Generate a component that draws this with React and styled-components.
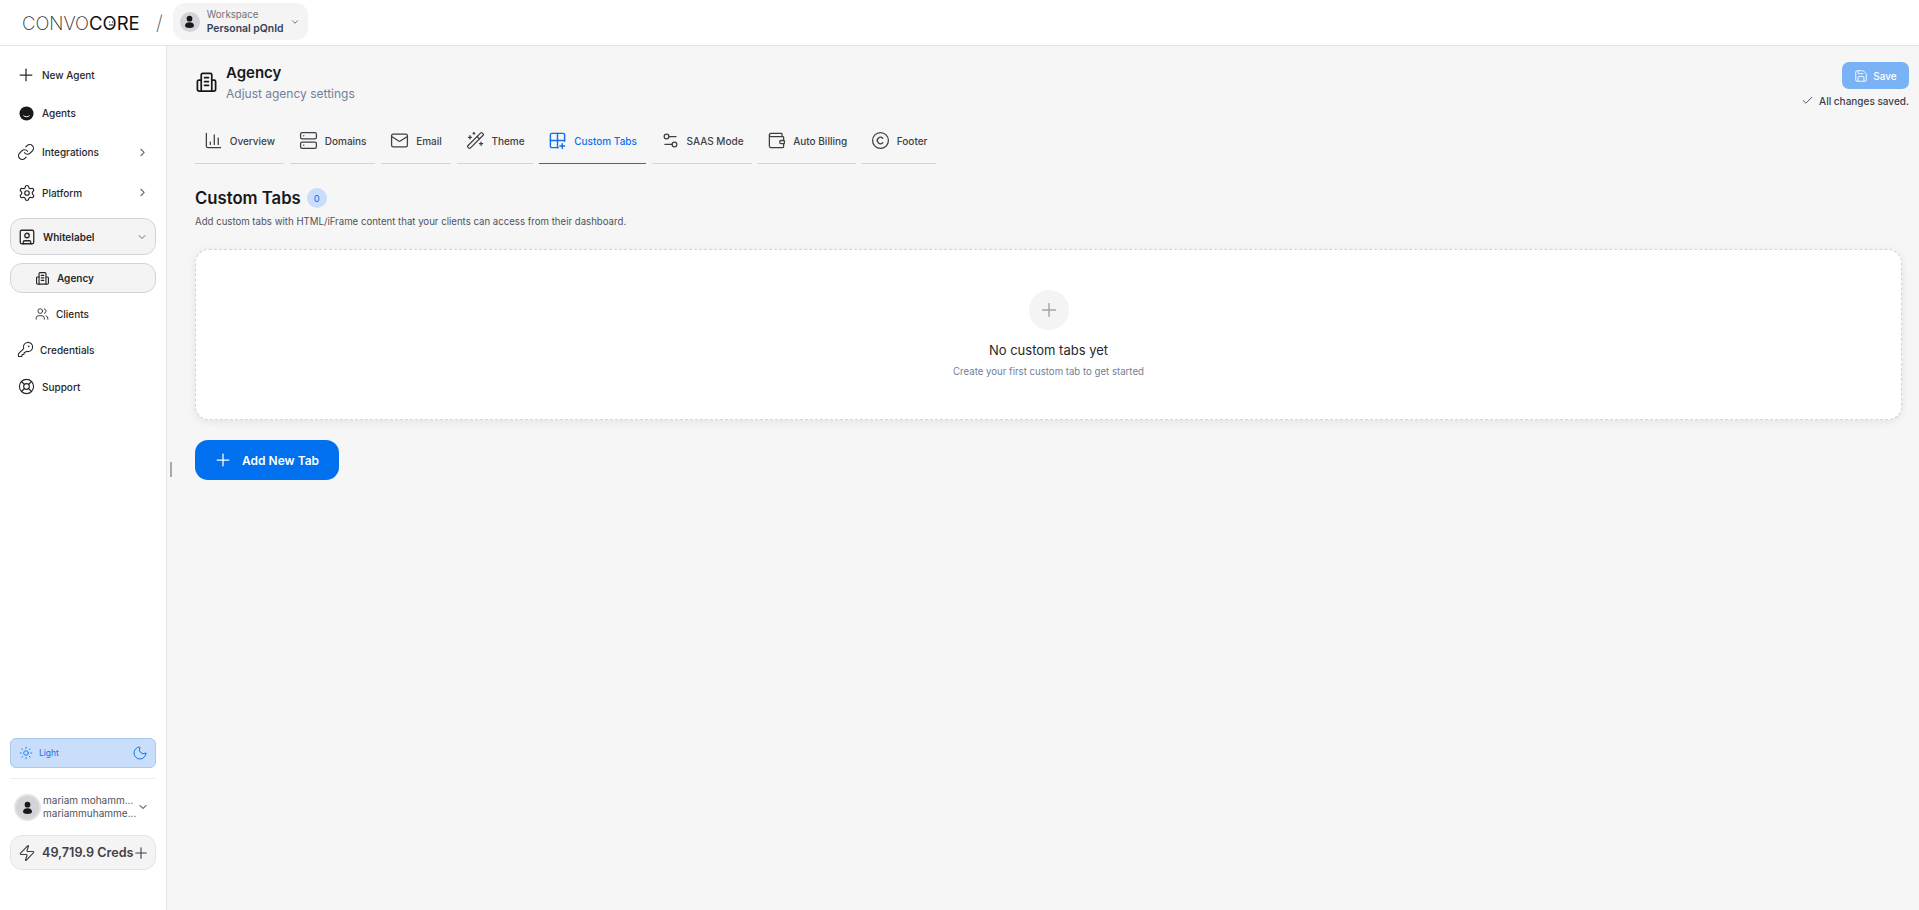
import styled, { createGlobalStyle } from 'styled-components'
import {
  Plus, Link, Settings, SquareUser, KeyRound, LifeBuoy, Users, Sun, Moon, Zap,
  ChevronRight, ChevronDown, ChartColumn, Server, Mail, WandSparkles,
  Settings2, Wallet, Copyright, Save, Check,
} from 'lucide-react'

const GlobalStyle = createGlobalStyle`
  html, body { margin: 0; padding: 0; height: 100%; background: #f6f6f6; }
  body { font-family: Inter, "Noto Sans", "Liberation Sans", sans-serif; color: #18181b; }
  * { box-sizing: border-box; }
`

const Page = styled.div`
  width: 100%;
  height: 910px;
  display: flex;
  flex-direction: column;
  overflow: hidden;
`

const TopBar = styled.header`
  height: 46px;
  flex: none;
  display: flex;
  align-items: center;
  padding-left: 22px;
  background: #fff;
  border-bottom: 1px solid #e4e4e7;
`

const Logo = styled.div`
  position: relative;
  font-size: 18.5px;
  font-weight: 200;
  color: #27272a;
  width: 118px;
  white-space: nowrap;

  b { font-weight: 400; color: #111; }
`

const LogoFace = styled.svg`
  position: absolute;
  left: 84px;
  top: 6px;
`

const Slash = styled.span`
  margin: 0 10px 0 16px;
  font-size: 20px;
  font-weight: 200;
  color: #52525b;
`

const WorkspaceButton = styled.div`
  display: flex;
  align-items: center;
  width: 135px;
  height: 37px;
  margin-bottom: 2px;
  padding: 0 8px 0 7px;
  background: #f4f4f5;
  border-radius: 12px;
`

const WorkspaceText = styled.div`
  margin-left: 7px;
  flex: 1;
  line-height: 14px;
`

const WorkspaceLabel = styled.div`
  font-size: 9.7px;
  color: #71717a;
`

const WorkspaceName = styled.div`
  font-size: 10.4px;
  font-weight: 600;
  color: #334155;
`

const Body = styled.div`
  flex: 1;
  display: flex;
  min-height: 0;
`

const Sidebar = styled.aside`
  position: relative;
  width: 167px;
  flex: none;
  display: flex;
  flex-direction: column;
  justify-content: space-between;
  padding: 10px 10px 40px;
  background: #fff;
  border-right: 1px solid #e4e4e7;
`

const Handle = styled.span`
  position: absolute;
  right: -6px;
  top: 416px;
  width: 2px;
  height: 15px;
  background: #a8a8ae;
`

const Nav = styled.nav`
  display: flex;
  flex-direction: column;
`

const NavItem = styled.div`
  display: flex;
  align-items: center;
  height: ${({ $h }) => $h || 38}px;
  padding-left: ${({ $indent }) => $indent || 9}px;
  padding-right: 7px;
  gap: ${({ $gap }) => $gap || 8}px;
  font-size: 10px;
  font-weight: 500;
  color: #27272a;

  svg:last-child:not(:first-child) { margin-left: auto; color: #71717a; }
`

const BoxedItem = styled(NavItem)`
  background: #f4f4f5;
  border: 1px solid #d4d4d8;
  border-radius: 12px;
  margin-top: ${({ $mt }) => $mt || 0}px;
  font-weight: 600;
`

const ThemeRow = styled.div`
  display: flex;
  align-items: center;
  height: 30px;
  padding: 0 7px 0 8px;
  gap: 6px;
  font-size: 8.5px;
  color: #1570ef;
  background: #c9defa;
  border: 1px solid #a9c8f0;
  border-radius: 6px;

  svg:last-child { margin-left: auto; }
`

const Divider = styled.div`
  height: 1px;
  margin: 10px 0;
  background: #eeeeef;
`

const UserRow = styled.div`
  display: flex;
  align-items: center;
  height: 36px;
  padding-left: 4px;
  gap: 2px;
`

const AvatarRing = styled.div`
  width: 27px;
  height: 27px;
  flex: none;
  display: flex;
  align-items: center;
  justify-content: center;
  border-radius: 50%;
  border: 2px solid #e4e4e7;
  background: #d4d4d8;
`

const WorkspaceAvatar = styled(AvatarRing)`
  width: 20px;
  height: 20px;
  border: 0;
`

const UserText = styled.div`
  width: 92px;
  font-size: 10px;
  line-height: 13px;
  color: #52525b;
`

const CredsBox = styled.div`
  display: flex;
  align-items: center;
  height: 35px;
  margin-top: 10px;
  padding: 0 6px 0 7px;
  gap: 6px;
  font-size: 12.6px;
  font-weight: 600;
  color: #3f3f46;
  background: #f4f4f5;
  border: 1px solid #e4e4e7;
  border-radius: 12px;
  white-space: nowrap;

  svg { flex: none; }
  svg:last-child { margin-left: -7px; }
`

const Main = styled.main`
  flex: 1;
  padding: 16px 10px 0 28px;
  background: #f6f6f6;
`

const HeaderRow = styled.div`
  display: flex;
  justify-content: space-between;
  align-items: flex-start;
`

const TitleGroup = styled.div`
  display: flex;
  align-items: center;
  gap: 8px;
  margin-top: 1px;
`

const PageTitle = styled.h1`
  margin: 0;
  font-size: 15px;
  line-height: 20px;
  font-weight: 600;
  color: #18181b;
`

const PageSubtitle = styled.p`
  margin: 3px 0 0;
  font-size: 12px;
  line-height: 16px;
  color: #71809a;
`

const SaveGroup = styled.div`
  display: flex;
  flex-direction: column;
  align-items: flex-end;
`

const SaveButton = styled.button`
  display: flex;
  align-items: center;
  justify-content: center;
  gap: 5px;
  width: 67px;
  height: 27px;
  border: 0;
  border-radius: 7px;
  font: 500 10px Inter, sans-serif;
  color: #fff;
  background: #7ab3f5;
`

const SavedNote = styled.div`
  display: flex;
  align-items: center;
  gap: 5px;
  margin-top: 5px;
  font-size: 10px;
  font-weight: 500;
  color: #3f3f46;
`

const Tabs = styled.div`
  display: flex;
  gap: 6px;
  margin-top: 14px;
`

const Tab = styled.div`
  display: flex;
  align-items: center;
  gap: 6.85px;
  height: 43px;
  padding: 0 8.9px 3px;
  font-size: 10px;
  font-weight: 500;
  color: ${({ $active }) => ($active ? '#0b72ef' : '#3f3f46')};
  border-bottom: 1px solid ${({ $active }) => ($active ? '#0b72ef' : '#d4d4d8')};
`

const SectionTitle = styled.div`
  display: flex;
  align-items: center;
  gap: 6px;
  margin-top: 23px;
`

const SectionHeading = styled.h2`
  margin: 0;
  font-size: 16.7px;
  line-height: 22px;
  font-weight: 600;
  color: #18181b;
`

const CountBadge = styled.span`
  width: 20px;
  height: 20px;
  display: flex;
  align-items: center;
  justify-content: center;
  border-radius: 50%;
  font-size: 9.5px;
  color: #1570ef;
  background: #c9defa;
`

const SectionHint = styled.p`
  margin: 6px 0 0;
  font-size: 9.65px;
  line-height: 14px;
  color: #52525b;
`

const EmptyCard = styled.div`
  height: 171px;
  margin: 20px 7px 0 0;
  display: flex;
  flex-direction: column;
  align-items: center;
  padding-top: 40px;
  background: #fff;
  border: 1px dashed #d4d4d8;
  border-radius: 14px;
  box-shadow: 0 2px 8px rgba(0, 0, 0, 0.08);
`

const EmptyIcon = styled.div`
  width: 40px;
  height: 40px;
  display: flex;
  align-items: center;
  justify-content: center;
  border-radius: 50%;
  color: #a1a1aa;
  background: #f4f4f5;
`

const EmptyTitle = styled.div`
  margin-top: 10px;
  font-size: 13px;
  line-height: 20px;
  color: #27272a;
`

const EmptyText = styled.div`
  margin-top: 5px;
  font-size: 9.65px;
  line-height: 14px;
  color: #71809a;
`

const AddButton = styled.button`
  display: flex;
  align-items: center;
  gap: 9px;
  width: 144px;
  height: 40px;
  margin-top: 20px;
  padding: 0 0 0 18px;
  border: 0;
  border-radius: 13px;
  font: 600 12px Inter, sans-serif;
  color: #fff;
  background: #0070ee;
`

const AgencyIcon = ({ size = 20 }) => (
  <svg width={size} height={size} viewBox="0 0 24 24" fill="none" stroke="currentColor" strokeWidth="1.8" strokeLinejoin="round" strokeLinecap="round">
    <path d="M6.5 21V4A1.5 1.5 0 0 1 8 2.500h8A1.500 1.500 0 0 1 17.500 4V21" />
    <path d="M6.5 9.500H4A1.500 1.500 0 0 0 2.500 11v8A2 2 0 0 0 4.500 21h15a2 2 0 0 0 2-2v-8A1.500 1.500 0 0 0 20 9.500h-2.500" />
    <path d="M10 7h4M10 11h4M10 15h4" />
  </svg>
)

const AgentsIcon = () => (
  <svg width="15" height="15" viewBox="0 0 16 16">
    <circle cx="8" cy="8" r="7.500" fill="#18181b" />
    <path d="M5 10.500c1.500 1.300 4.500 1.300 6 0" stroke="#fff" strokeWidth="1" fill="none" strokeLinecap="round" />
  </svg>
)

const PersonIcon = ({ size = 12 }) => (
  <svg width={size} height={size} viewBox="0 0 16 16" fill="#18181b">
    <circle cx="8" cy="4.500" r="3.500" />
    <path d="M2.500 13c0-2.500 2.500-4 5.500-4s5.500 1.500 5.500 4-2.500 3-5.500 3-5.500-.5-5.500-3z" />
  </svg>
)

const CustomTabsIcon = () => (
  <svg width="19" height="19" viewBox="0 0 24 24" fill="none" stroke="currentColor" strokeWidth="1.8" strokeLinecap="round" strokeLinejoin="round">
    <path d="M13 21H5a2 2 0 0 1-2-2V5a2 2 0 0 1 2-2h14a2 2 0 0 1 2 2v8" />
    <path d="M3 12h18M12 3v18M18 16v6M15 19h6" />
  </svg>
)

const tabs = [
  { label: 'Overview', icon: <ChartColumn size={19} strokeWidth={1.6} /> },
  { label: 'Domains', icon: <Server size={19} strokeWidth={1.6} /> },
  { label: 'Email', icon: <Mail size={19} strokeWidth={1.6} /> },
  { label: 'Theme', icon: <WandSparkles size={19} strokeWidth={1.6} /> },
  { label: 'Custom Tabs', icon: <CustomTabsIcon />, active: true },
  { label: 'SAAS Mode', icon: <Settings2 size={19} strokeWidth={1.6} /> },
  { label: 'Auto Billing', icon: <Wallet size={19} strokeWidth={1.6} /> },
  { label: 'Footer', icon: <Copyright size={19} strokeWidth={1.6} /> },
]

export default function App() {
  return (
    <Page>
      <GlobalStyle />
      <TopBar>
        <Logo>
          CONVO<b>CORE</b>
          <LogoFace width="10" height="10" viewBox="0 0 10 10">
            <path d="M3 4h1M6 4h1M3 7h4" stroke="#111" strokeWidth="1" />
          </LogoFace>
        </Logo>
        <Slash>/</Slash>
        <WorkspaceButton>
          <WorkspaceAvatar><PersonIcon size={13} /></WorkspaceAvatar>
          <WorkspaceText>
            <WorkspaceLabel>Workspace</WorkspaceLabel>
            <WorkspaceName>Personal pQnId</WorkspaceName>
          </WorkspaceText>
          <ChevronDown size={10} strokeWidth={2} color="#52525b" />
        </WorkspaceButton>
      </TopBar>

      <Body>
        <Sidebar>
          <Nav>
            <NavItem $indent={6} $gap={6}><Plus size={20} strokeWidth={1.5} />New Agent</NavItem>
            <NavItem><AgentsIcon />Agents</NavItem>
            <NavItem $h={40} $indent={7} $gap={7}><Link size={18} strokeWidth={1.6} />Integrations<ChevronRight size={13} /></NavItem>
            <NavItem $h={41} $indent={8} $gap={6}><Settings size={18} strokeWidth={1.6} />Platform<ChevronRight size={13} /></NavItem>
            <BoxedItem $h={37} $mt={5} $indent={7} $gap={7}><SquareUser size={18} strokeWidth={1.7} />Whitelabel<ChevronDown size={12} /></BoxedItem>
            <BoxedItem $h={30} $mt={8} $indent={24} $gap={7}><AgencyIcon size={15} />Agency</BoxedItem>
            <NavItem $h={41} $indent={25} $gap={7}><Users size={14} strokeWidth={1.5} />Clients</NavItem>
            <NavItem $h={31} $indent={7} $gap={6}><KeyRound size={17} strokeWidth={1.5} />Credentials</NavItem>
            <NavItem $h={43} $indent={8} $gap={7}><LifeBuoy size={17} strokeWidth={1.6} />Support</NavItem>
          </Nav>
          <div>
            <ThemeRow>
              <Sun size={14} strokeWidth={1.5} />Light<Moon size={16} strokeWidth={1.5} />
            </ThemeRow>
            <Divider />
            <UserRow>
              <AvatarRing><PersonIcon size={13} /></AvatarRing>
              <UserText>mariam mohamm...<br />mariammuhamme...</UserText>
              <ChevronDown size={12} strokeWidth={2} />
            </UserRow>
            <CredsBox>
              <Zap size={18} strokeWidth={1.5} />49,719.9 Creds<Plus size={18} strokeWidth={1.5} />
            </CredsBox>
          </div>
          <Handle />
        </Sidebar>

        <Main>
          <HeaderRow>
            <TitleGroup>
              <AgencyIcon size={23} />
              <div>
                <PageTitle>Agency</PageTitle>
                <PageSubtitle>Adjust agency settings</PageSubtitle>
              </div>
            </TitleGroup>
            <SaveGroup>
              <SaveButton><Save size={14} strokeWidth={1.5} />Save</SaveButton>
              <SavedNote><Check size={13} strokeWidth={1.6} />All changes saved.</SavedNote>
            </SaveGroup>
          </HeaderRow>

          <Tabs>
            {tabs.map(({ label, icon, active }) => (
              <Tab key={label} $active={active}>{icon}{label}</Tab>
            ))}
          </Tabs>

          <SectionTitle>
            <SectionHeading>Custom Tabs</SectionHeading>
            <CountBadge>0</CountBadge>
          </SectionTitle>
          <SectionHint>Add custom tabs with HTML/iFrame content that your clients can access from their dashboard.</SectionHint>

          <EmptyCard>
            <EmptyIcon><Plus size={22} strokeWidth={1.5} /></EmptyIcon>
            <EmptyTitle>No custom tabs yet</EmptyTitle>
            <EmptyText>Create your first custom tab to get started</EmptyText>
          </EmptyCard>

          <AddButton><Plus size={20} strokeWidth={1.5} />Add New Tab</AddButton>
        </Main>
      </Body>
    </Page>
  )
}
